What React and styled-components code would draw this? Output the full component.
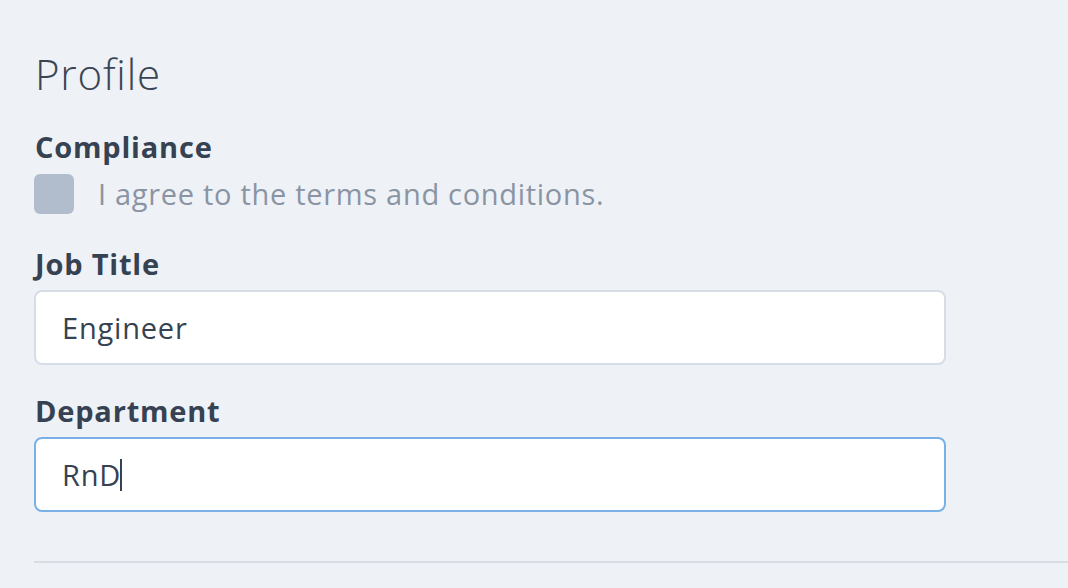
import React from 'react';
import styled, { createGlobalStyle } from 'styled-components';

const GlobalStyle = createGlobalStyle`
  html, body {
    margin: 0;
    padding: 0;
    background: #eef1f6;
  }
  body {
    font-family: "Open Sans", "Noto Sans", sans-serif;
    color: #364252;
  }
`;

const Page = styled.div`
  width: 1068px;
  height: 588px;
  overflow: hidden;
  background: #eef1f6;
  padding: 47px 0 0 34px;
  box-sizing: border-box;
`;

const Heading = styled.h1`
  margin: 0 0 0 1px;
  font-size: 42px;
  font-weight: 300;
  letter-spacing: 0.8px;
  line-height: 54px;
  color: #3a4553;
`;

const Field = styled.div`
  display: flex;
  flex-direction: column;
  margin-top: ${(p) => p.$gap || 0}px;
`;

const Label = styled.label`
  font-size: 29px;
  font-weight: 700;
  letter-spacing: 0.8px;
  line-height: 34px;
  color: #364252;
  margin-left: 1px;
`;

const CheckRow = styled.label`
  display: flex;
  align-items: center;
  gap: 24px;
  margin-top: 10px;
`;

const Box = styled.span`
  width: 40px;
  height: 40px;
  border-radius: 6px;
  background: #b1bdcd;
  flex-shrink: 0;
`;

const CheckText = styled.span`
  font-size: 29px;
  letter-spacing: 0.7px;
  color: #8a94a3;
  line-height: 40px;
`;

const InputWrap = styled.div`
  position: relative;
  width: 912px;
  margin-top: 9px;
`;

const Input = styled.input`
  display: block;
  box-sizing: border-box;
  width: 100%;
  height: 75px;
  margin: 0;
  padding: 0 26px;
  border: 2px solid ${(p) => (p.$focused ? '#79b1e6' : '#d6dde7')};
  border-radius: 8px;
  background: #fff;
  font-family: "Open Sans", "Noto Sans", sans-serif;
  font-size: 29px;
  letter-spacing: 0.8px;
  color: #364252;
  outline: none;
  caret-color: transparent;
`;

// mirrors the value invisibly so the caret bar lands right after the text
const CaretLayer = styled.div`
  position: absolute;
  top: 0;
  left: 28px;
  height: 75px;
  display: flex;
  align-items: center;
  pointer-events: none;
  font-family: "Open Sans", "Noto Sans", sans-serif;
  font-size: 29px;
  letter-spacing: 0.8px;
`;

const Ghost = styled.span`
  visibility: hidden;
  white-space: pre;
`;

const Caret = styled.span`
  width: 2px;
  height: 32px;
  margin-left: -1px;
  background: #364252;
`;

const TextField = ({ value, focused }) => (
  <InputWrap>
    <Input defaultValue={value} $focused={focused} readOnly />
    {focused && (
      <CaretLayer>
        <Ghost>{value}</Ghost>
        <Caret />
      </CaretLayer>
    )}
  </InputWrap>
);

const Divider = styled.hr`
  margin: 49px 0 0 0;
  border: none;
  height: 2px;
  background: #d8dde6;
`;

export default function App() {
  return (
    <Page>
      <GlobalStyle />
      <Heading>Profile</Heading>
      <Field $gap={29}>
        <Label>Compliance</Label>
        <CheckRow>
          <Box />
          <CheckText>I agree to the terms and conditions.</CheckText>
        </CheckRow>
      </Field>
      <Field $gap={33}>
        <Label>Job Title</Label>
        <TextField value="Engineer" />
      </Field>
      <Field $gap={29}>
        <Label>Department</Label>
        <TextField value="RnD" focused />
      </Field>
      <Divider />
    </Page>
  );
}
